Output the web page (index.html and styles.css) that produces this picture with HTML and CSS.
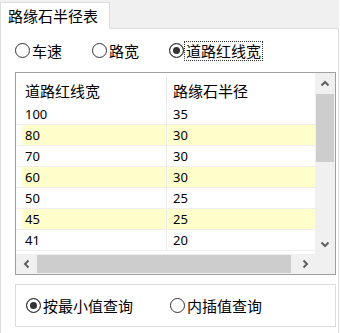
FILE: index.html
```html
<!DOCTYPE html>
<html lang="zh-CN">
<head>
  <meta charset="UTF-8">
  <meta name="viewport" content="width=device-width, initial-scale=1.0">
  <title>路缘石半径表</title>

  <link rel="stylesheet" href="styles.css">
</head>
<body>

  <div class="tabs">
    <div class="tab">路缘石半径表</div>
  </div>

  <div class="page">
    <div class="modes">
      <label class="radio"><span class="mark"></span>车速</label>
      <label class="radio"><span class="mark"></span>路宽</label>
      <label class="radio checked"><span class="mark"></span><span class="focus">道路红线宽</span></label>
    </div>

    <div class="list">
      <div class="list-main">
        <div class="list-view">
          <div class="list-head"><span>道路红线宽</span><span>路缘石半径</span></div>
          <div class="row"><span>100</span><span>35</span></div>
          <div class="row"><span>80</span><span>30</span></div>
          <div class="row"><span>70</span><span>30</span></div>
          <div class="row"><span>60</span><span>30</span></div>
          <div class="row"><span>50</span><span>25</span></div>
          <div class="row"><span>45</span><span>25</span></div>
          <div class="row"><span>41</span><span>20</span></div>
        </div>
        <div class="vscroll">
          <div class="arrow">
            <svg width="10" height="7" viewBox="0 0 10 7"><polyline points="1.5,5.5 5,2 8.5,5.5" /></svg>
          </div>
          <div class="track"><div class="thumb"></div></div>
          <div class="arrow">
            <svg width="10" height="7" viewBox="0 0 10 7"><polyline points="1.5,1.5 5,5 8.5,1.5" /></svg>
          </div>
        </div>
      </div>
      <div class="hscroll">
        <div class="arrow">
          <svg width="7" height="10" viewBox="0 0 7 10"><polyline points="5.5,1.5 2,5 5.5,8.5" /></svg>
        </div>
        <div class="track"><div class="thumb"></div></div>
        <div class="arrow">
          <svg width="7" height="10" viewBox="0 0 7 10"><polyline points="1.5,1.5 5,5 1.5,8.5" /></svg>
        </div>
        <div class="corner"></div>
      </div>
    </div>

    <div class="query">
      <label class="radio checked"><span class="mark"></span>按最小值查询</label>
      <label class="radio"><span class="mark"></span>内插值查询</label>
    </div>
  </div>

</body>
</html>
```

FILE: styles.css
```css
* {
  box-sizing: border-box;
}
body {
  margin: 0;
  width: 340px;
  height: 333px;
  overflow: hidden;
  background: #fff;
  color: #000;
  font-family: "Noto Sans CJK SC", "Noto Sans", sans-serif;
  font-size: 15px;
}

/* tab strip */
.tabs {
  display: flex;
  align-items: flex-end;
  width: 339px;
  height: 29px;
  background: #f0f0f0;
  border-bottom: 1px solid #dcdcdc;
}
.tab {
  width: 110px;
  height: 27px;
  margin-bottom: -1px;
  padding-left: 7px;
  line-height: 25px;
  background: #fff;
  border: 1px solid #dcdcdc;
  border-bottom: none;
}
.page {
  width: 339px;
  height: 304px;
  padding: 0 2px 0 14px;
  border-left: 1px solid #dcdcdc;
  border-right: 1px solid #dcdcdc;
}

/* radio buttons */
.modes {
  display: flex;
  align-items: center;
  gap: 30px;
  height: 43px;
}
.radio {
  display: flex;
  align-items: center;
  gap: 2px;
  line-height: 16px;
}
.mark {
  width: 15px;
  height: 15px;
  border: 1px solid #333;
  border-radius: 50%;
  background: #fff;
}
.checked .mark {
  background: #333;
  box-shadow: inset 0 0 0 3px #fff;
}
.focus {
  outline: 1px dotted #333;
  outline-offset: 1px;
}

/* list view */
.list {
  width: 321px;
  height: 203px;
  border: 1px solid #a0a0a0;
}
.list-main {
  display: flex;
  height: 181px;
}
.list-view {
  width: 299px;
  overflow: hidden;
}
.list-head,
.row {
  display: grid;
  grid-template-columns: 145px 1fr;
  padding-left: 6px;
}
.list-head {
  height: 31px;
  padding-top: 4px;
  line-height: 27px;
}
.list-head span:first-child,
.row span:first-child {
  padding-left: 3px;
  border-right: 1px solid #eaeaea;
}
.list-head span:last-child,
.row span:last-child {
  padding-left: 6px;
}
.list-head span:first-child {
  border-right-color: #e5e5e5;
}
.row {
  height: 21px;
  line-height: 20px;
  font-family: "Noto Sans", sans-serif;
  font-size: 13px;
  border-bottom: 1px solid #efefef;
}
.row:nth-child(odd) span {
  background: #ffffcc;
}

/* scroll bars */
.vscroll {
  display: flex;
  flex-direction: column;
  width: 20px;
  background: #f0f0f0;
}
.vscroll .arrow {
  height: 20px;
}
.vscroll .track {
  flex: 1;
  padding: 1px 1px 0;
}
.vscroll .thumb {
  height: 68px;
  background: #cdcdcd;
}
.hscroll {
  display: flex;
  height: 20px;
  background: #f0f0f0;
}
.hscroll .arrow {
  width: 20px;
}
.hscroll .track {
  flex: 1;
  padding: 1px 0 1px 1px;
}
.hscroll .thumb {
  width: 254px;
  height: 100%;
  background: #cdcdcd;
}
.arrow {
  display: flex;
  align-items: center;
  justify-content: center;
}
.arrow polyline {
  fill: none;
  stroke: #606060;
  stroke-width: 2;
}
.corner {
  width: 20px;
}

/* bottom group */
.query {
  display: flex;
  align-items: center;
  gap: 37px;
  width: 321px;
  height: 43px;
  margin-top: 9px;
  padding-left: 10px;
  border: 1px solid #dcdcdc;
}
```
